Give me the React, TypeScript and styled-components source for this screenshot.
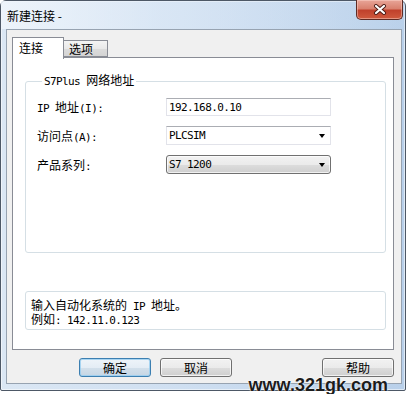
import React from "react";
import styled, { createGlobalStyle } from "styled-components";

const GlobalStyle = createGlobalStyle`
  body {
    margin: 0;
    background: #ffffff;
    font-family: "Noto Sans CJK SC", sans-serif;
  }
`;

const Page = styled.div`
  position: relative;
  width: 411px;
  height: 394px;
  overflow: hidden;
`;

const Window = styled.div`
  box-sizing: border-box;
  width: 406px;
  height: 391px;
  display: flex;
  flex-direction: column;
  border: 1px solid #4d5866;
  border-radius: 6px 6px 2px 2px;
  background: linear-gradient(90deg, #dbe7f4 0%, #cfdff1 45%, #b9d0ea 100%);
  box-shadow: inset 0 0 0 1px rgba(255, 255, 255, 0.55);
`;

const TitleBar = styled.div`
  height: 28px;
  flex: none;
  display: flex;
  align-items: flex-start;
  justify-content: space-between;
  padding-left: 6px;
  background: linear-gradient(90deg, rgba(240, 246, 252, 0.85) 0%, rgba(225, 236, 248, 0.5) 40%, rgba(190, 212, 236, 0.2) 100%);
`;

const TitleText = styled.div`
  font-size: 12px;
  line-height: 29px;
  color: #000;
`;

const CloseButton = styled.div`
  box-sizing: border-box;
  width: 47px;
  height: 20px;
  margin: -1px 2px 0 0;
  display: flex;
  align-items: center;
  justify-content: center;
  border: 1px solid #5e2b24;
  border-top: none;
  border-radius: 0 0 5px 5px;
  background: linear-gradient(180deg, #e8a598 0%, #d9816f 45%, #c0412c 55%, #cf5a3e 100%);
  box-shadow: inset 0 0 0 1px rgba(255, 220, 210, 0.45);
`;

const Client = styled.div`
  flex: 1;
  display: flex;
  flex-direction: column;
  margin: 0 3px 6px 5px;
  padding: 7px 7px 0 5px;
  border: 1px solid #97a3b1;
  background: #f0f0f0;
`;

const TabStrip = styled.div`
  height: 20px;
  display: flex;
  align-items: flex-end;
  position: relative;
  z-index: 1;
`;

const Tab = styled.div<{ $active?: boolean }>`
  box-sizing: border-box;
  height: ${(p) => (p.$active ? "22px" : "17px")};
  width: ${(p) => (p.$active ? "52px" : "45px")};
  margin-bottom: ${(p) => (p.$active ? "-2px" : "0")};
  margin-left: ${(p) => (p.$active ? "0" : "-1px")};
  padding-left: ${(p) => (p.$active ? "6px" : "5px")};
  border: 1px solid #898c95;
  border-bottom: ${(p) => (p.$active ? "none" : "1px solid #898c95")};
  background: ${(p) =>
    p.$active
      ? "#ffffff"
      : "linear-gradient(180deg, #f4f4f4 0%, #e9e9e9 50%, #dcdcdc 51%, #d4d4d4 100%)"};
  font-size: 12px;
  line-height: ${(p) => (p.$active ? "19px" : "16px")};
  position: relative;
  z-index: ${(p) => (p.$active ? 2 : 1)};
`;

const Panel = styled.div`
  box-sizing: border-box;
  height: 293px;
  display: flex;
  flex-direction: column;
  padding: 0 7px 0 12px;
  border: 1px solid #898c95;
  background: #ffffff;
`;

const GroupBox = styled.fieldset`
  box-sizing: border-box;
  height: 180px;
  margin: 15px 0 0;
  padding: 9px 0 0 11px;
  border: 1px solid #d5dfe5;
  border-radius: 3px;
  min-width: 0;
`;

const Legend = styled.legend`
  margin-left: 5px;
  padding: 0 2px;
  line-height: 14px;
  font-size: 12px;
`;

const FormGrid = styled.div`
  display: grid;
  grid-template-columns: 129px 165px;
  row-gap: 10px;
  align-items: center;
`;

const Label = styled.div`
  line-height: 14px;
  color: #000;
`;

const TextField = styled.div`
  box-sizing: border-box;
  height: 18px;
  padding-left: 2px;
  display: flex;
  align-items: center;
  border: 1px solid #e2e3ea;
  border-top-color: #abadb3;
  background: #fff;
`;

const Combo = styled.div<{ $list?: boolean }>`
  box-sizing: border-box;
  height: 19px;
  padding: 0 5px 0 2px;
  display: flex;
  align-items: center;
  justify-content: space-between;
  border: 1px solid ${(p) => (p.$list ? "#707070" : "#e2e3ea")};
  border-top-color: ${(p) => (p.$list ? "#707070" : "#abadb3")};
  border-radius: ${(p) => (p.$list ? "3px" : "0")};
  background: ${(p) =>
    p.$list
      ? "linear-gradient(180deg, #f2f2f2 0%, #ebebeb 50%, #dddddd 51%, #cfcfcf 100%)"
      : "#ffffff"};
  box-shadow: ${(p) => (p.$list ? "inset 0 0 0 1px rgba(255,255,255,0.7)" : "none")};
`;

const Arrow = styled.span`
  width: 0;
  height: 0;
  border-left: 3.5px solid transparent;
  border-right: 3.5px solid transparent;
  border-top: 4px solid #000;
  margin-top: 1px;
`;

const InfoBox = styled.div`
  box-sizing: border-box;
  height: 39px;
  margin-top: 38px;
  padding: 4px 0 0 5px;
  border: 1px solid #d5dfe5;
  border-radius: 3px;
`;

const InfoLine = styled.div`
  line-height: 13px;
  height: 13px;
  white-space: nowrap;
  margin-top: 1px;
`;

const ButtonRow = styled.div`
  display: flex;
  gap: 9px;
  margin-top: 8px;
  padding-left: 67px;
`;

const Button = styled.div<{ $default?: boolean; $push?: boolean }>`
  box-sizing: border-box;
  width: 72px;
  height: 19px;
  display: flex;
  align-items: center;
  justify-content: center;
  margin-left: ${(p) => (p.$push ? "auto" : "0")};
  border: 1px solid ${(p) => (p.$default ? "#3c7fb1" : "#707070")};
  border-radius: 3px;
  background: ${(p) =>
    p.$default
      ? "linear-gradient(180deg, #eef4f9 0%, #e4edf5 50%, #d3e0eb 51%, #c6d6e4 100%)"
      : "linear-gradient(180deg, #f2f2f2 0%, #ebebeb 50%, #dddddd 51%, #cfcfcf 100%)"};
  box-shadow: ${(p) =>
    p.$default
      ? "inset 0 0 0 1px rgba(150, 205, 240, 0.8)"
      : "inset 0 0 0 1px rgba(255, 255, 255, 0.7)"};
  font-size: 12px;
  color: #000;
`;

const Watermark = styled.div`
  position: absolute;
  right: 23px;
  bottom: -1px;
  font-family: "Liberation Sans", Arial, sans-serif;
  font-weight: bold;
  font-size: 18px;
  line-height: 20px;
  color: #1c1c1c;
  text-shadow: 0 0 2px #ffffff, 0 0 1px #ffffff;
`;

const Half = styled.span`
  display: inline-block;
  font-family: "DejaVu Sans Mono", monospace;
  font-size: 11px;
  letter-spacing: -0.6px;
  line-height: inherit;
`;

const Full = styled.span`
  display: inline-block;
  font-family: "Noto Sans CJK SC", sans-serif;
  font-size: 12px;
  line-height: inherit;
`;

// SimSun-like text: half-width latin, full-width CJK
function Sim({ text }: { text: string }) {
  const parts = text.split(/([\x20-\x7e]+)/).filter(Boolean);
  return (
    <>
      {parts.map((part, i) =>
        /^[\x20-\x7e]+$/.test(part) ? (
          <Half key={i}>{part.replace(/ /g, "\u00a0")}</Half>
        ) : (
          <Full key={i}>{part}</Full>
        )
      )}
    </>
  );
}

function CloseGlyph() {
  return (
    <svg width="14" height="11" viewBox="0 0 14 11">
      <path d="M3 2 L11 9 M11 2 L3 9" stroke="#4a1a14" strokeWidth="4" strokeLinecap="round" />
      <path d="M3 2 L11 9 M11 2 L3 9" stroke="#ffffff" strokeWidth="2.2" strokeLinecap="round" />
    </svg>
  );
}

export default function App() {
  return (
    <Page>
      <GlobalStyle />
      <Window>
        <TitleBar>
          <TitleText>新建连接 -</TitleText>
          <CloseButton>
            <CloseGlyph />
          </CloseButton>
        </TitleBar>
        <Client>
          <TabStrip>
            <Tab $active>
              <Sim text="连接" />
            </Tab>
            <Tab>
              <Sim text="选项" />
            </Tab>
          </TabStrip>
          <Panel>
            <GroupBox>
              <Legend>
                <Sim text="S7Plus 网络地址" />
              </Legend>
              <FormGrid>
                <Label>
                  <Sim text="IP 地址(I):" />
                </Label>
                <TextField>
                  <Half>192.168.0.10</Half>
                </TextField>
                <Label>
                  <Sim text="访问点(A):" />
                </Label>
                <Combo>
                  <Half>PLCSIM</Half>
                  <Arrow />
                </Combo>
                <Label>
                  <Sim text="产品系列:" />
                </Label>
                <Combo $list>
                  <Half>S7 1200</Half>
                  <Arrow />
                </Combo>
              </FormGrid>
            </GroupBox>
            <InfoBox>
              <InfoLine>
                <Sim text="输入自动化系统的 IP 地址。" />
              </InfoLine>
              <InfoLine>
                <Sim text="例如: 142.11.0.123" />
              </InfoLine>
            </InfoBox>
          </Panel>
          <ButtonRow>
            <Button $default>确定</Button>
            <Button>取消</Button>
            <Button $push>帮助</Button>
          </ButtonRow>
        </Client>
      </Window>
      <Watermark>www.321gk.com</Watermark>
    </Page>
  );
}
